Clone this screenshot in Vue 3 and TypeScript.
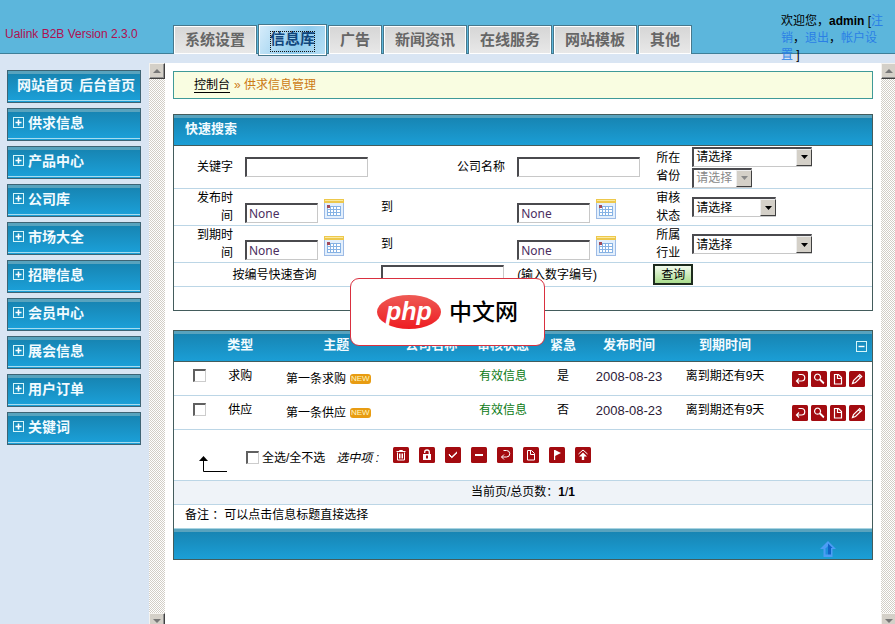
<script setup lang="ts">
import { ref } from 'vue'

interface Listing {
  id: number
  type: string
  title: string
  status: string
  urgent: string
  published: string
  expires: string
  checked: boolean
}

const tabs = ['系统设置', '信息库', '广告', '新闻资讯', '在线服务', '网站模板', '其他']
const activeTab = ref('信息库')

const menu = ['供求信息', '产品中心', '公司库', '市场大全', '招聘信息', '会员中心', '展会信息', '用户订单', '关键词']

const listings = ref<Listing[]>([
  { id: 1, type: '求购', title: '第一条求购', status: '有效信息', urgent: '是', published: '2008-08-23', expires: '离到期还有9天', checked: false },
  { id: 2, type: '供应', title: '第一条供应', status: '有效信息', urgent: '否', published: '2008-08-23', expires: '离到期还有9天', checked: false },
])

const allChecked = ref(false)
function toggleAll() {
  listings.value.forEach((row) => (row.checked = allChecked.value))
}

const dateRows = ref([
  { key: 'publish', label: '发布时间', from: 'None', to: 'None', side: '审核状态', size: 'medium' },
  { key: 'expire', label: '到期时间', from: 'None', to: 'None', side: '所属行业', size: 'wide' },
])

const icons: Record<string, string> = {
  trash: 'M3.5 4.5h9M6.5 4.5v-1h3v1M4.5 5.5v7.5h7V5.5M6.5 6.5v5M8 6.5v5M9.5 6.5v5',
  check: 'M4 7l2.8 2.8L12 4.8M4 8l2.8 2.8L12 5.800M4 7.500l2.800 2.800L12 5.300',
  minus: 'M4 7.5h8M4 8.5h8',
  back: 'M6.500 3.500h3a3 3 0 0 1 0 6.500h-5M7 7.500L4.500 10L7 12.500',
  search: 'M6.5 3.2a3 3 0 1 0 .1 0M8.8 8.8l4 4M9.4 8.4l3.6 3.6',
  page: 'M4.5 3.5h4l3 3v6.5h-7zM7.5 3.5v4h4',
  edit: 'M3.5 12.5l1-3 6.2-6 2 2-6.2 6zM9.5 4.8l2 2',
}
const rowActions = [
  { name: 'back', label: '返回' },
  { name: 'search', label: '查看' },
  { name: 'page', label: '复制' },
  { name: 'edit', label: '编辑' },
]
const bulkActions = [
  { name: 'trash', label: '删除' },
  { name: 'lock', label: '锁定' },
  { name: 'check', label: '审核' },
  { name: 'minus', label: '取消' },
  { name: 'back', label: '返回' },
  { name: 'page', label: '复制' },
  { name: 'flag', label: '标记' },
  { name: 'up', label: '置顶' },
]
</script>

<template>
  <div class="page">
    <header class="top">
      <div class="brand">Ualink B2B Version 2.3.0</div>
      <nav class="tabs">
        <a v-for="tab in tabs" :key="tab" href="#" class="tab" :class="{ active: tab === activeTab }" @click.prevent="activeTab = tab"><span>{{ tab }}</span></a>
      </nav>
      <div class="user">欢迎您，<b>admin</b> [<a href="#">注销</a>，<a href="#">退出</a>，<a href="#">帐户设置</a> ]</div>
    </header>

    <div class="frames">
      <aside class="side">
        <div class="side-item home"><a href="#">网站首页</a><a href="#">后台首页</a></div>
        <button v-for="item in menu" :key="item" type="button" class="side-item">
          <svg width="11" height="11" viewBox="0 0 11 11" aria-hidden="true">
            <rect x=".5" y=".5" width="10" height="10" fill="none" stroke="#d5f6fa" />
            <path d="M2.5 5.5h6M5.5 2.5v6" stroke="#fff" stroke-width="1.6" />
          </svg>
          <span>{{ item }}</span>
        </button>
      </aside>

      <div class="scrollbar" aria-hidden="true">
        <span class="knob"><svg width="8" height="4" viewBox="0 0 8 4"><path d="M0 4l4-4 4 4z" fill="#777" /></svg></span>
        <span class="knob"><svg width="8" height="4" viewBox="0 0 8 4"><path d="M0 0l4 4 4-4z" fill="#777" /></svg></span>
      </div>

      <main class="main">
        <div class="crumbs"><a href="#">控制台</a><span>» 供求信息管理</span></div>

        <form class="panel search" @submit.prevent>
          <h2 class="bar">快速搜索</h2>
          <table class="form">
            <colgroup>
              <col class="f-a"><col class="f-b"><col class="f-b"><col class="f-b"><col class="f-e"><col class="f-f">
            </colgroup>
            <tbody>
              <tr class="first">
                <td class="lab"><label for="keyword">关键字</label></td>
                <td><input id="keyword" type="text" class="text"></td>
                <td class="lab"><label for="company">公司名称</label></td>
                <td><input id="company" type="text" class="text"></td>
                <td class="lab narrow"><label for="province">所在省份</label></td>
                <td>
                  <div class="stack">
                    <span class="pick wide">
                      <select id="province"><option>请选择</option></select>
                      <i><svg width="7" height="4" viewBox="0 0 7 4"><path d="M0 0h7L3.500 4z" /></svg></i>
                    </span>
                    <span class="pick small off">
                      <select aria-label="城市" disabled><option>请选择</option></select>
                      <i><svg width="7" height="4" viewBox="0 0 7 4"><path d="M0 0h7L3.500 4z" /></svg></i>
                    </span>
                  </div>
                </td>
              </tr>
              <tr v-for="row in dateRows" :key="row.key" class="mid">
                <td class="lab"><label :for="row.key + '-from'">{{ row.label }}</label></td>
                <td class="low">
                  <div class="date">
                    <input :id="row.key + '-from'" v-model="row.from" type="text" class="text short">
                    <button type="button" class="plain" aria-label="选择日期">
                      <svg width="20" height="20" viewBox="0 0 20 20">
                        <rect x=".5" y=".5" width="19" height="19" fill="#e3effc" stroke="#9dbbe6" />
                        <path d="M0 0h20v4H0z" fill="#edc84c" /><path d="M1 1h18v1H1z" fill="#fae9a0" />
                        <path d="M3 7h14v10H3z" fill="#fff" />
                        <path d="M3.500 7v10M6.500 7v10M9.500 7v10M12.500 7v10M16.500 7v10M3 7.500h14M3 10.500h14M3 13.500h14M3 16.500h14" stroke="#86b2e4" />
                        <path d="M3 6h3v3H3z" fill="#a34a58" />
                      </svg>
                    </button>
                  </div>
                </td>
                <td><label :for="row.key + '-to'">到</label></td>
                <td class="low">
                  <div class="date">
                    <input :id="row.key + '-to'" v-model="row.to" type="text" class="text short">
                    <button type="button" class="plain" aria-label="选择日期">
                      <svg width="20" height="20" viewBox="0 0 20 20">
                        <rect x=".5" y=".5" width="19" height="19" fill="#e3effc" stroke="#9dbbe6" />
                        <path d="M0 0h20v4H0z" fill="#edc84c" /><path d="M1 1h18v1H1z" fill="#fae9a0" />
                        <path d="M3 7h14v10H3z" fill="#fff" />
                        <path d="M3.500 7v10M6.500 7v10M9.500 7v10M12.500 7v10M16.500 7v10M3 7.500h14M3 10.500h14M3 13.500h14M3 16.500h14" stroke="#86b2e4" />
                        <path d="M3 6h3v3H3z" fill="#a34a58" />
                      </svg>
                    </button>
                  </div>
                </td>
                <td class="lab narrow"><label :for="row.key + '-side'">{{ row.side }}</label></td>
                <td>
                  <span class="pick" :class="row.size">
                    <select :id="row.key + '-side'"><option>请选择</option></select>
                    <i><svg width="7" height="4" viewBox="0 0 7 4"><path d="M0 0h7L3.500 4z" /></svg></i>
                  </span>
                </td>
              </tr>
              <tr class="last">
                <td colspan="2" class="center"><label for="number">按编号快速查询</label></td>
                <td><input id="number" type="text" class="text"></td>
                <td>(输入数字编号)</td>
                <td colspan="2"><button type="submit" class="go">查询</button></td>
              </tr>
            </tbody>
          </table>
        </form>

        <section class="panel">
          <table class="list">
            <colgroup>
              <col class="c-check"><col class="c-type"><col class="c-title"><col class="c-company"><col class="c-90"><col class="c-urgent"><col class="c-102"><col class="c-90"><col class="c-102">
            </colgroup>
            <thead>
              <tr>
                <th></th><th>类型</th><th class="h-title">主题</th><th>公司名称</th><th>审核状态</th><th>紧急</th><th>发布时间</th><th>到期时间</th>
                <th class="fold">
                  <button type="button" class="plain" aria-label="收起">
                    <svg width="11" height="11" viewBox="0 0 11 11"><rect x=".5" y=".5" width="10" height="10" fill="none" stroke="#d5f6fa" /><path d="M2.500 5.500h6" stroke="#fff" stroke-width="1.400" /></svg>
                  </button>
                </th>
              </tr>
            </thead>
            <tbody>
              <tr v-for="row in listings" :key="row.id">
                <td><input v-model="row.checked" type="checkbox" class="box" :aria-label="row.title"></td>
                <td>{{ row.type }}</td>
                <td class="level"><div class="title"><a href="#">{{ row.title }}</a><span class="new">NEW</span></div></td>
                <td></td>
                <td class="ok">{{ row.status }}</td>
                <td>{{ row.urgent }}</td>
                <td class="day">{{ row.published }}</td>
                <td>{{ row.expires }}</td>
                <td class="level">
                  <div class="ops">
                    <button v-for="act in rowActions" :key="act.name" type="button" class="plain" :aria-label="act.label">
                      <svg width="16" height="16" viewBox="0 0 16 16"><rect width="16" height="16" rx="1.500" fill="#a30b10" /><path :d="icons[act.name]" fill="none" stroke="#fff" stroke-width="1.200" /></svg>
                    </button>
                  </div>
                </td>
              </tr>
            </tbody>
          </table>

          <div class="bulk">
            <svg class="turn" width="30" height="17" viewBox="0 0 30 17" aria-hidden="true"><path d="M5.500 4v11.500H29" fill="none" stroke="#000" /><path d="M1 5l4.500-5L10 5z" /></svg>
            <label class="all"><input v-model="allChecked" type="checkbox" class="box" @change="toggleAll">全选/全不选</label>
            <em>选中项 :</em>
            <div class="bulk-icons">
              <button v-for="act in bulkActions" :key="act.name" type="button" class="plain" :aria-label="act.label">
                <svg width="16" height="16" viewBox="0 0 16 16">
                  <rect width="16" height="16" rx="1.500" fill="#a30b10" />
                  <g v-if="act.name === 'lock'"><path d="M4 7h8v6H4z" fill="#fff" /><path d="M5.700 6V5a2.300 2 0 0 1 4.600 0v2" fill="none" stroke="#fff" stroke-width="1.300" /><path d="M7 8.500h2v3H7z" fill="#a30b10" /></g>
                  <g v-else-if="act.name === 'flag'"><path d="M5 3h1.200v10H5z" fill="#fff" /><path d="M6 3l6 3-6 3z" fill="#fff" /></g>
                  <g v-else-if="act.name === 'up'"><path d="M3.500 7L8 3l4.500 4" fill="none" stroke="#fff" /><path d="M4 9.500l4-4 4 4H9.200V13H6.800V9.500z" fill="#fff" /></g>
                  <path v-else :d="icons[act.name]" fill="none" stroke="#fff" />
                </svg>
              </button>
            </div>
          </div>
          <div class="pager">当前页/总页数：<b>1</b>/<b>1</b></div>
          <div class="note">备注 ：可以点击信息标题直接选择</div>
          <div class="foot">
            <a href="#" aria-label="返回顶部">
              <svg width="16" height="16" viewBox="0 0 16 16"><path d="M8 0l8 8h-3.500v8h-9V8H0z" fill="#4c9cf5" /><path d="M8 2.500l4.500 4.500H11v6.500H8z" fill="#0f62c8" /><path d="M8 5v8.500H5.500V7.500z" fill="#1d8fdd" /></svg>
            </a>
          </div>
        </section>
      </main>

      <div class="scrollbar outer" aria-hidden="true">
        <span class="knob"><svg width="8" height="4" viewBox="0 0 8 4"><path d="M0 4l4-4 4 4z" fill="#777" /></svg></span>
        <span class="knob"><svg width="8" height="4" viewBox="0 0 8 4"><path d="M0 0l4 4 4-4z" fill="#777" /></svg></span>
      </div>
    </div>

    <div class="stamp"><span class="oval">php</span><span class="cn">中文网</span></div>
  </div>
</template>

<style>
body { margin: 0; background: #fff; }
</style>

<style scoped>
* { box-sizing: border-box; }
.page {
  position: relative;
  display: flex;
  flex-direction: column;
  height: 100vh;
  overflow: hidden;
  background: #d9e5f3;
  color: #000;
  font: 12px/18px "Liberation Sans", "Noto Sans CJK SC", sans-serif;
}
button, input, select { font: inherit; color: inherit; margin: 0; }
a { color: inherit; text-decoration: none; }
.plain { display: block; padding: 0; border: 0; background: none; }
.plain svg { display: block; }

.top {
  display: flex;
  align-items: flex-end;
  flex: none;
  height: 54px;
  margin-bottom: 9px;
  background: #5cb6dc;
  box-shadow: inset 0 -1px #3f7f98;
}
.brand { width: 173px; padding: 0 0 11px 5px; color: #b01050; }
.tabs { display: flex; align-items: flex-end; gap: 1px; }
.tab {
  padding: 1px;
  border: 1px solid #47788c;
  border-bottom: 0;
  background: #fff;
  color: #666;
  font-size: 15px;
  font-weight: 700;
  line-height: 26px;
  white-space: nowrap;
}
.tab span { display: block; padding: 0 10px; height: 26px; background: linear-gradient(#d6d6d6, #e8e8e8); }
.tab.active { border-bottom: 1px solid #47788c; margin-bottom: -2px; color: #11467c; }
.tab.active span { position: relative; height: 28px; background: linear-gradient(120deg, #d6ecfa, #8ecbed 60%, #b8dff5); }
.tab.active span::after { content: ""; position: absolute; inset: 5px 10px 2px; border: 1px dotted #111; }
.user { align-self: flex-start; width: 106px; margin: 13px 8px 0 auto; line-height: 17px; }
.user a { color: #2a7fe6; }

.frames { display: flex; flex: 1; min-height: 0; }
.side { display: flex; flex-direction: column; gap: 5px; width: 149px; padding: 7px 8px 0 7px; flex: none; }
.side-item {
  display: flex;
  align-items: center;
  gap: 4px;
  height: 33px;
  padding: 0 5px 4px;
  border: 1px solid #3d6475;
  background: linear-gradient(#58a3be 0 3px, #1785b3 3px, #1b9fd7 29px, #a5dcf0 29px 30px, #1b9fd7 30px);
  color: #f2fbff;
  font-size: 14px;
  font-weight: 700;
}
.home { justify-content: center; gap: 6px; padding-left: 9px; }

.scrollbar {
  display: flex;
  flex-direction: column;
  justify-content: space-between;
  flex: none;
  width: 16px;
  margin-bottom: -5px;
  background: repeating-conic-gradient(#fff 0 25%, #d2cec6 0 50%) 0 0 / 2px 2px;
}
.outer { margin-right: -2px; }
.knob {
  display: flex;
  align-items: center;
  justify-content: center;
  height: 16px;
  border: 1px solid;
  border-color: #f4f2ee #404040 #404040 #f4f2ee;
  background: #d4d0c8;
  box-shadow: inset -1px -1px #909090;
}

.main { flex: 1; min-width: 0; padding: 8px 8px 0; background: #fff; }
.crumbs {
  display: flex;
  gap: 4px;
  padding: 4px 20px;
  margin-bottom: 15px;
  border: 1px solid #3f9a98;
  background: #f9fde1;
}
.crumbs a { text-decoration: underline; text-underline-offset: 3px; }
.crumbs span { color: #cc7a14; }

.panel { border: 1px solid #435c5c; background: #fff; }
.search { margin-bottom: 19px; padding-bottom: 23px; }
.bar, .list thead tr { background: linear-gradient(#58a3be 0 3px, #1785b3 3px, #1b9fd7 31px); }
.bar {
  height: 31px;
  margin: 0;
  padding-left: 11px;
  border-bottom: 1px solid #435c5c;
  color: #f2fbff;
  font-size: 13px;
  line-height: 28px;
}
table { width: 100%; table-layout: fixed; border-collapse: separate; border-spacing: 0; }
.f-a { width: 9.3%; }
.f-b { width: 19.5%; }
.f-e { width: 5.6%; }
.f-f { width: 26.6%; }
.form td { padding: 0 6px; border-bottom: 1px solid #bcd6e6; vertical-align: middle; }
.first td { height: 43px; }
.mid td { height: 37px; }
.last td { height: 24px; }
.form .lab { padding-left: 16px; text-align: right; }
.form .narrow { padding-left: 6px; }
.form .low { vertical-align: bottom; padding-bottom: 2px; }
.center { text-align: center; }
.text {
  display: block;
  width: 100%;
  max-width: 123px;
  height: 20px;
  padding: 0 2px;
  border: 1px solid;
  border-width: 2px 1px 1px 2px;
  border-color: #4a4a4e #c8c8c8 #c8c8c8 #4a4a4e;
  border-radius: 0;
  background: #fff;
  outline: 0;
}
.short { width: 73px; color: #4b2e60; font-family: "Noto Sans", "Noto Sans CJK SC", sans-serif; }
.date { display: flex; align-items: flex-end; gap: 6px; }
.date .plain { margin-bottom: 4px; }
.stack { display: flex; flex-direction: column; gap: 1px; }
.pick { position: relative; display: block; height: 20px; }
.wide { width: 120px; }
.medium { width: 84px; }
.small { width: 60px; }
.pick select {
  appearance: none;
  display: block;
  width: 100%;
  height: 20px;
  padding: 0 2px;
  border: 1px solid;
  border-width: 2px 1px 1px 2px;
  border-color: #4a4a4e #c8c8c8 #c8c8c8 #4a4a4e;
  border-radius: 0;
  background: #fff;
  opacity: 1;
  line-height: 16px;
}
.pick i {
  position: absolute;
  inset: 2px 0 1px auto;
  display: flex;
  align-items: center;
  justify-content: center;
  width: 16px;
  border: 1px solid;
  border-color: #eee #404040 #404040 #eee;
  background: #d4d0c8;
  pointer-events: none;
}
.off select { color: #888; }
.off path { fill: #888; }
.go {
  display: block;
  width: 40px;
  height: 21px;
  padding: 0;
  border: 2px solid #1d2b1d;
  background: linear-gradient(#f2faec, #a9dc8c);
  line-height: 16px;
}

.c-check { width: 7.2%; }
.c-type { width: 4.6%; }
.c-title { width: 21.2%; }
.c-company { width: 7.7%; }
.c-90 { width: 12.9%; }
.c-urgent { width: 4.3%; }
.c-102 { width: 14.6%; }
.list th {
  height: 31px;
  padding: 0 0 3px;
  border-bottom: 1px solid #435c5c;
  color: #f2fbff;
  font-size: 13px;
  white-space: nowrap;
}
.list .h-title { padding-left: 12px; }
.list .fold { padding: 0 5px 0 0; }
.fold .plain { margin-left: auto; }
.list td { height: 34px; padding: 0 0 6px; border-bottom: 1px solid #bcd6e6; text-align: center; white-space: nowrap; }
.list .level { padding: 0; }
.ok { color: #0a7a14; }
.list .day { padding-bottom: 3px; color: #2d2038; font-size: 13px; }
.box {
  appearance: none;
  display: block;
  width: 13px;
  height: 13px;
  margin: 0 auto;
  border: 1px solid;
  border-width: 2px 1px 1px 2px;
  border-color: #606060 #ccc #ccc #606060;
  background: #fff;
}
.box:checked { background: #2a5; }
.title { display: flex; align-items: center; justify-content: center; gap: 4px; padding-right: 4px; }
.new {
  height: 10px;
  padding: 0 1px;
  border-radius: 3px;
  background: #e89c12;
  color: #fff6c0;
  font-size: 8px;
  line-height: 10px;
}
.ops { display: flex; justify-content: flex-end; gap: 3px; padding-right: 7px; }

.bulk { display: flex; align-items: center; height: 51px; padding-left: 24px; border-bottom: 1px solid #bcd6e6; }
.turn { margin: 18px 18px 0 0; }
.all { display: flex; align-items: center; gap: 3px; margin: 5px 11px 0 0; }
.all .box { margin: 0; }
.bulk em { width: 57px; margin-top: 5px; }
.bulk-icons { display: flex; gap: 10px; }
.pager { height: 24px; padding: 2px 0; border-bottom: 1px solid #bcd6e6; background: #eff3f8; text-align: center; }
.note { height: 23px; padding: 1px 11px; }
.foot {
  display: flex;
  justify-content: flex-end;
  align-items: flex-end;
  height: 31px;
  padding: 0 36px 2px;
  background: linear-gradient(#a8d4e2 0 1px, #58a3be 1px 4px, #1785b3 4px, #1b9fd7);
}
.foot svg { display: block; }

.stamp {
  position: absolute;
  left: 350px;
  top: 278px;
  display: flex;
  align-items: center;
  justify-content: center;
  gap: 8px;
  width: 195px;
  height: 68px;
  border: 1px solid #d9303f;
  border-radius: 9px;
  background: #fff;
}
.oval {
  width: 64px;
  height: 34px;
  border-radius: 50%;
  background: linear-gradient(#ee5a55, #ee1c22);
  color: #fff;
  font-size: 25px;
  font-style: italic;
  font-weight: 700;
  line-height: 32px;
  text-align: center;
}
.cn { font-size: 23px; font-weight: 500; line-height: 36px; }
</style>
